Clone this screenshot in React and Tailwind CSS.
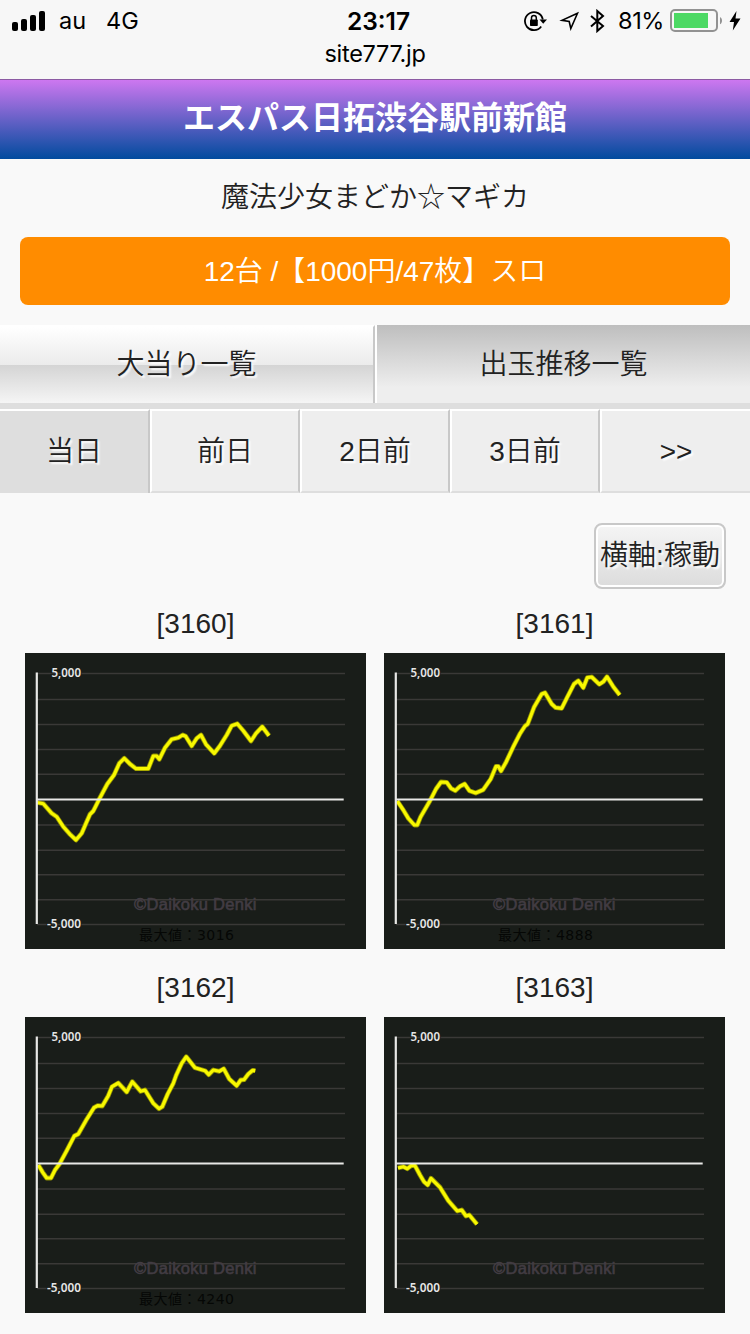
import React, { useState } from 'react';

const GRID_LINES = [20.5, 46.5, 71.5, 96.5, 121.2, 172, 197.2, 221.8, 246.8, 271.5];

const MACHINES = [
  {
    id: 3160,
    max: 3016,
    points:
      '12.3,149.5 18.3,150.7 26.7,160.3 31.7,163.7 38.3,173.7 45,181.3 51,187 56.7,180.3 61,170.3 65,161.3 68.3,158 75,144.7 82.3,131 89,122 94.3,110.3 99.3,105.3 105,111 111,115.7 123.3,115.7 128.3,103 131.7,103 134.3,106.3 140,94.7 146.7,86.3 153.3,84.7 157.7,82 160.7,83.3 166.7,93 171.7,85.3 176,82 181,91.3 189.3,100.3 195,92.7 201.7,82 206.7,72.7 212.3,70.7 218.3,77.7 226,88 231,80.3 237.3,73.7 244,82.7',
  },
  {
    id: 3161,
    max: 4888,
    points:
      '13.3,148 19.3,157 24.3,165.3 30.3,172 33.3,172 36.7,163.7 46,147.7 52,136 57,129 62.7,129.3 67,135.3 71.3,137.7 76,133.3 80.7,131 85.3,137.7 91.7,140 99.3,136.7 106.7,126 112,113.3 114.3,113.3 117,118 122,109.3 129.3,93.7 136,80.7 141,73 143.7,71 150,54.3 157.7,41 161,39.7 167.7,51 171.7,54.7 177.7,55.3 182.7,45.3 190,31 194.3,27.7 199.3,34.7 203.3,24.7 207.7,24 215.3,31.3 219.3,28.7 223,23.7 229.3,33.7 235.7,42',
  },
  {
    id: 3162,
    max: 4240,
    points:
      '13.3,148 17.7,155.3 21.7,161 26,161 30,153 34.3,147.3 41.7,133.7 49.3,119 53.3,117 61.7,102.3 69,90.7 72.7,88.7 77.3,89 83.3,78.7 87,69.7 93.3,66 101.7,75 107.3,64.7 115.7,74.3 120,73 128.3,86.3 134,91.7 137.3,89.7 142.7,77 148.3,66.3 151,58.7 156.7,46.3 161.3,39.7 170,50.7 180,53.7 183.7,57.7 188.3,53 194.3,54.3 198.7,51.7 204.3,62 211.7,68.7 215.7,63 219,62.7 223.3,57 227.7,53.3 230.3,53.7',
  },
  {
    id: 3163,
    max: null,
    points:
      '14,151 19.3,149.7 23.3,151.7 27.7,148.3 31,148.7 36,158 40,164.7 43.7,168 47,161.3 56,170.3 64.3,183.7 73.3,194 77.7,193 82,199 85.3,198 93,207.3',
  },
];

const DAYS = ['当日', '前日', '2日前', '3日前', '>>'];

function StatusBar() {
  return (
    <div className="h-[79px] bg-[#f7f7f7] font-['Inter','Liberation_Sans',sans-serif] text-[23.5px] font-normal text-black">
      <div className="grid h-10 grid-cols-[1fr_80px_1fr] items-center leading-10">
        <div className="flex items-center pl-3">
          <svg width="33" height="20" viewBox="0 0 33 20">
            <rect x="0" y="11" width="6" height="9" rx="2" />
            <rect x="9" y="8" width="6" height="12" rx="2" />
            <rect x="18" y="4" width="6" height="16" rx="2" />
            <rect x="27" y="0" width="6" height="20" rx="2" />
          </svg>
          <span className="ml-[14px] pt-px">au</span>
          <span className="ml-[20px] pt-px">4G</span>
        </div>
        <div className="pl-[7px] pt-px text-center text-[24.5px] font-semibold">23:17</div>
        <div className="flex items-center justify-end pr-[9px]">
          {/* rotation lock */}
          <svg width="23" height="22" viewBox="0 0 23 22" fill="none">
            <path d="M17.2 16.500A9 9 0 1 1 18.800 9.500" stroke="#000" strokeWidth="1.800" />
            <path d="M15.500 9.500H23L19.200 13.800Z" fill="#000" />
            <rect x="6" y="9.500" width="7.800" height="6.500" rx="0.800" fill="#000" />
            <path d="M7.500 10V7.800a2.400 2.400 0 0 1 4.800 0v2.200" stroke="#000" strokeWidth="1.500" />
          </svg>
          {/* location arrow */}
          <svg className="ml-[12px]" width="20" height="20" viewBox="0 0 20 20" fill="none">
            <path d="M18.500 2.200L3 9.300L10.200 10.500L11.800 17.500Z" stroke="#000" strokeWidth="1.600" />
          </svg>
          {/* bluetooth */}
          <svg className="ml-[11px]" width="15" height="24" viewBox="0 0 15 24" fill="none">
            <path d="M1 7L13 17L7.300 22V2L13 7L1 17.500" stroke="#000" strokeWidth="2" />
          </svg>
          <span className="ml-[13px] pt-px tracking-[-0.4px]">81%</span>
          <svg className="ml-[6px]" width="54" height="24" viewBox="0 0 54 24" fill="none">
            <rect x="1" y="1" width="46" height="21" rx="4" stroke="#929292" strokeWidth="2" />
            <rect x="4" y="4" width="34" height="15" fill="#4cd964" />
            <path d="M50 8c2.700 1.300 2.700 6 0 7.300Z" fill="#929292" />
          </svg>
          <svg className="ml-[5px]" width="12" height="20" viewBox="0 0 12 20">
            <path d="M7.500 0L0.500 11H5L3.800 19.500L11.500 7.500H6.500Z" />
          </svg>
        </div>
      </div>
      <div className="text-center leading-7 tracking-[-0.3px]">site777.jp</div>
    </div>
  );
}

function SlumpGraph({ machine }) {
  return (
    <svg className="block" width="341" height="296" viewBox="0 0 341 296">
      <rect width="341" height="296" fill="#191d19" />
      {GRID_LINES.map((y) => (
        <line key={y} x1="12" x2="320" y1={y} y2={y} stroke="#3a3937" strokeWidth="1.4" />
      ))}
      <g
        className="font-['Noto_Sans','Liberation_Sans',sans-serif]"
        fontSize="12"
        fontWeight="600"
        fill="#e6e6e6"
        stroke="#191d19"
        strokeWidth="2"
        paintOrder="stroke"
      >
        <text x="26.500" y="23.600" textLength="29.500" lengthAdjust="spacingAndGlyphs">5,000</text>
        <text x="22" y="275.200" textLength="34" lengthAdjust="spacingAndGlyphs">-5,000</text>
      </g>
      <text
        x="109"
        y="257"
        className="font-['Liberation_Sans',sans-serif]"
        fontSize="16.500"
        textLength="122.500"
        fill="#423c43"
        stroke="#423c43"
        strokeWidth="0.600"
      >
        ©Daikoku Denki
      </text>
      {machine.max && (
        <text
          x="114"
          y="286.800"
          className="font-['DejaVu_Sans','Noto_Sans_CJK_JP',sans-serif]"
          fontSize="14"
          fontWeight="400"
          textLength="95"
          fill="#050705"
        >
          最大値：{machine.max}
        </text>
      )}
      <polyline
        points={machine.points}
        fill="none"
        stroke="#8f9000"
        strokeWidth="4.800"
        strokeLinejoin="round"
      />
      <polyline
        points={machine.points}
        fill="none"
        stroke="#f8f800"
        strokeWidth="3.200"
        strokeLinejoin="round"
      />
      <line x1="11.800" x2="11.800" y1="19.500" y2="271" stroke="#e8e8e6" strokeWidth="2.200" />
      <line x1="11" x2="318.700" y1="146.500" y2="146.500" stroke="#e8e8e6" strokeWidth="2.200" />
    </svg>
  );
}

export default function App() {
  const [activeDay, setActiveDay] = useState('当日');

  return (
    <div className="h-[1334px] w-[750px] overflow-hidden bg-[#f9f9f9] font-['Liberation_Sans','Noto_Sans_CJK_JP',sans-serif] text-[28px] font-[350] text-[#222]">
      <StatusBar />

      <header className="h-20 border-t border-[#8c5ba3] bg-[linear-gradient(to_bottom,#cd77f0,#004b9e)] text-center">
        <h1 className="text-[32px] font-bold leading-[76px] text-white">エスパス日拓渋谷駅前新館</h1>
      </header>

      <p className="h-[78px] text-center leading-[77px]">魔法少女まどか☆マギカ</p>

      <div className="mx-5 h-[68px] rounded-lg bg-[#ff8c00] text-center leading-[70px] text-white">
        12台 / <span className="ml-[5px] [font-feature-settings:'halt']">【</span>1000円/47枚】スロ
      </div>

      {/* List type tabs */}
      <div className="mt-5 flex h-[84px] border-b-[6px] border-[#dedede] text-center leading-[76px]">
        <button className="w-[375px] border-r-2 border-t-2 border-r-[#c8c8c8] border-t-white bg-[linear-gradient(to_bottom,#fff,#ebebeb_50%,#d4d4d4_50%,#f5f5f5)] [text-shadow:2px_2px_2px_#fff]">
          大当り一覧
        </button>
        <button className="flex-1 border-l-2 border-white bg-[linear-gradient(to_bottom,#bebebe,#eee_80%)] pt-0.5">
          出玉推移一覧
        </button>
      </div>

      {/* Day selector */}
      <div className="flex h-[84px] text-center leading-[76px]">
        {DAYS.map((day) => (
          <button
            key={day}
            onClick={() => setActiveDay(day)}
            className={`w-[150px] border-t-2 border-t-white [text-shadow:2px_2px_2px_#fff] ${
              day === '>>' ? '' : 'border-r-2 border-r-[#c8c8c8]'
            } ${
              activeDay === day
                ? 'bg-[#dedede]'
                : 'border-b-2 border-l-2 border-b-[#dedede] border-l-white bg-[#eee] pt-0.5'
            }`}
          >
            {day}
          </button>
        ))}
      </div>

      <div className="flex justify-end pr-6 pt-[30px]">
        <button className="h-[66px] w-[132px] whitespace-nowrap rounded-lg border-2 border-[#c8c8c8] bg-gradient-to-b from-[#f5f5f5] to-[#dcdcdc] leading-[60px] shadow-[inset_0_0_0_2px_#fff] [text-shadow:2px_2px_2px_#fff]">
          横軸:稼動
        </button>
      </div>

      <div className="grid grid-cols-[341px_341px] gap-x-[18px] pl-[25px]">
        {MACHINES.map((machine) => (
          <div key={machine.id} className="h-[364px] pt-[6px]">
            <div className="h-[58px] text-center leading-[58px]">[{machine.id}]</div>
            <SlumpGraph machine={machine} />
          </div>
        ))}
      </div>
    </div>
  );
}
